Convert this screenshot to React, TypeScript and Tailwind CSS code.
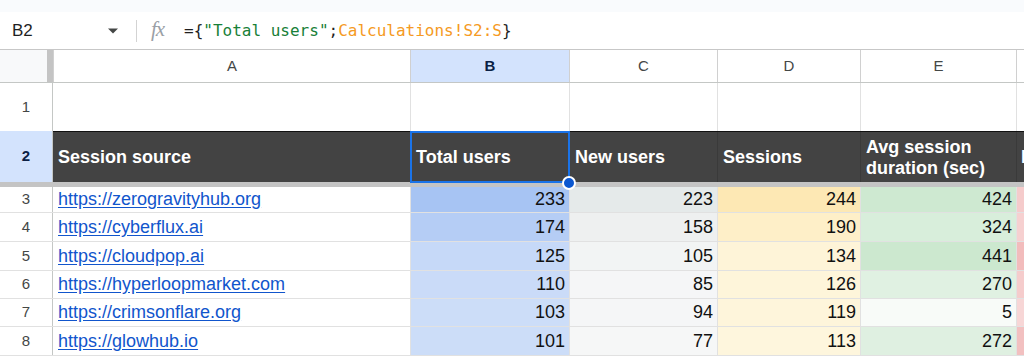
const font = "font-['Liberation_Sans',Arial,sans-serif]";

const cols = [
  "w-[53px] shrink-0",
  "w-[357px] shrink-0",
  "w-[159px] shrink-0",
  "w-[148px] shrink-0",
  "w-[143px] shrink-0",
  "w-[156px] shrink-0",
  "flex-1 min-w-0",
];

type DataRow = {
  n: number;
  url: string;
  h: string;
  vals: [number, string][];
  f: string;
};

const rows: DataRow[] = [
  { n: 3, url: "https://zerogravityhub.org", h: "h-[26px]", vals: [[233, "bg-[#a7c4f3]"], [223, "bg-[#e5eaea]"], [244, "bg-[#fde8b4]"], [424, "bg-[#cee9d1]"]], f: "bg-[#f5cbcb]" },
  { n: 4, url: "https://cyberflux.ai", h: "h-[29px]", vals: [[174, "bg-[#b5cdf5]"], [158, "bg-[#eef0f0]"], [190, "bg-[#feefc8]"], [324, "bg-[#d8eedb]"]], f: "bg-[#f6d0d0]" },
  { n: 5, url: "https://cloudpop.ai", h: "h-[29px]", vals: [[125, "bg-[#c6d9f8]"], [105, "bg-[#f2f4f4]"], [134, "bg-[#fef4d8]"], [441, "bg-[#cce8cf]"]], f: "bg-[#f2bcbc]" },
  { n: 6, url: "https://hyperloopmarket.com", h: "h-[28px]", vals: [[110, "bg-[#cadbf8]"], [85, "bg-[#f5f6f7]"], [126, "bg-[#fef5da]"], [270, "bg-[#e0f1e2]"]], f: "bg-[#f5cccc]" },
  { n: 7, url: "https://crimsonflare.org", h: "h-[28px]", vals: [[103, "bg-[#ccddf8]"], [94, "bg-[#f5f6f7]"], [119, "bg-[#fef5db]"], [5, "bg-[#f8fbf8]"]], f: "bg-[#f7d6d6]" },
  { n: 8, url: "https://glowhub.io", h: "h-[29px]", vals: [[101, "bg-[#ccddf8]"], [77, "bg-[#f6f7f7]"], [113, "bg-[#fef6dd]"], [272, "bg-[#dff0e1]"]], f: "bg-[#f2c0c0]" },
];

function FxIcon() {
  return (
    <span className="font-['Liberation_Serif',serif] italic text-[21px] text-[#9aa0a6] tracking-[-1px] leading-none">
      fx
    </span>
  );
}

export default function App() {
  return (
    <div className={`w-[1024px] h-[358px] overflow-hidden bg-white ${font}`}>
      <div className="h-[12px] bg-[#f9fbfd]" />

      {/* formula bar */}
      <div className="h-[38px] flex items-center border-b border-[#c7c7c7]">
        <div className="w-[130px] shrink-0 flex items-center pl-[12px] pr-[11px]">
          <span className="text-[17px] text-[#1f1f1f] flex-1">B2</span>
          <svg width="12" height="8" viewBox="0 0 12 8">
            <path d="M1 1.5h10L6 6.5z" fill="#444746" />
          </svg>
        </div>
        <div className="w-px h-[22px] bg-[#d3d3d3] ml-[6px]" />
        <div className="ml-[14px] w-[26px]">
          <FxIcon />
        </div>
        <div className="ml-[7px] text-[16px] font-['DejaVu_Sans_Mono','Liberation_Mono',monospace] text-[#1f1f1f] whitespace-nowrap">
          ={"{"}
          <span className="text-[#188038]">"Total users"</span>;
          <span className="text-[#f59a23]">Calculations!S2:S</span>
          {"}"}
        </div>
      </div>

      {/* column headers */}
      <div className="h-[33px] flex border-b border-[#c4c7c5]">
        <div className={`${cols[0]} flex`}>
          <div className="flex-1 bg-[#f8f9fa]" />
          <div className="w-[6px] bg-[#c4c4c4]" />
        </div>
        {["A", "B", "C", "D", "E", ""].map((c, i) => (
          <div
            key={i}
            className={`${cols[i + 1]} flex items-center justify-center text-[15px] border-l border-[#d0d0d0] ${
              c === "B" ? "bg-[#d3e3fd] text-[#0b1f44] font-bold" : "text-[#444746]"
            }`}
          >
            {c}
          </div>
        ))}
      </div>

      {/* row 1 */}
      <div className="h-[48px] flex">
        <div className={`${cols[0]} flex items-center justify-center text-[15px] text-[#444746] border-r border-[#c4c7c5]`}>1</div>
        {cols.slice(1).map((w, i) => (
          <div key={i} className={`${w} ${i > 0 ? "border-l border-[#e1e1e1]" : ""}`} />
        ))}
      </div>

      {/* row 2: header */}
      <div className="h-[51px] flex">
        <div className={`${cols[0]} flex items-center justify-center text-[15px] font-bold text-[#0b1f44] bg-[#d3e3fd] border-r border-[#c4c7c5]`}>
          2
        </div>
        <div className="flex-1 min-w-0 flex bg-[#434343] border-t border-[#111] text-white font-bold text-[18px] leading-[21px]">
          <div className={`${cols[1]} flex items-center pl-[5px] pt-[1px]`}>Session source</div>
          <div className={`${cols[2]} relative flex items-center pl-[5px] pt-[1px] border-l border-[#3a3a3a]`}>
            Total users
            <div className="absolute -top-px -left-px -right-px -bottom-px border-2 border-[#1a73e8]" />
            <div className="absolute -right-[7px] -bottom-[8px] w-[14px] h-[14px] rounded-full bg-[#0b57d0] border-2 border-white z-10" />
          </div>
          <div className={`${cols[3]} flex items-center pl-[5px] pt-[1px] border-l border-[#3a3a3a]`}>New users</div>
          <div className={`${cols[4]} flex items-center pl-[5px] pt-[1px] border-l border-[#3a3a3a]`}>Sessions</div>
          <div className={`${cols[5]} flex items-center pl-[5px] pt-[1px] border-l border-[#3a3a3a]`}>
            Avg session
            <br />
            duration (sec)
          </div>
          <div className={`${cols[6]} flex items-center pl-[4px] pt-[1px] border-l border-[#3a3a3a] whitespace-nowrap overflow-hidden`}>
            Bounce
          </div>
        </div>
      </div>

      {/* frozen divider */}
      <div className="h-[5px] bg-[#c4c4c4]" />

      {/* data rows */}
      {rows.map((r) => (
        <div key={r.n} className={`${r.h} flex border-b border-[#e1e1e1]`}>
          <div className={`${cols[0]} flex items-center justify-center text-[15px] text-[#444746] border-r border-[#c4c7c5]`}>
            {r.n}
          </div>
          <div className={`${cols[1]} flex items-center pl-[5px]`}>
            <a href="#" className="text-[18px] text-[#1155cc] underline underline-offset-[2px]">
              {r.url}
            </a>
          </div>
          {r.vals.map(([v, bg], i) => (
            <div
              key={i}
              className={`${cols[i + 2]} ${bg} flex items-center justify-end pr-[4px] text-[18px] text-[#111] border-l border-[#e1e1e1]`}
            >
              {v}
            </div>
          ))}
          <div className={`${cols[6]} ${r.f} border-l border-[#e1e1e1]`} />
        </div>
      ))}
    </div>
  );
}
